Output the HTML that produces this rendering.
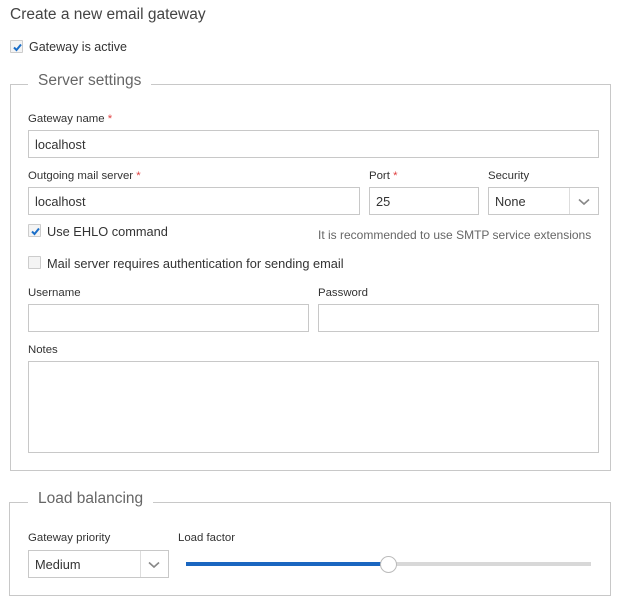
<!DOCTYPE html>
<html><head><meta charset="utf-8"><style>
*{box-sizing:border-box;margin:0;padding:0}
body{width:624px;height:608px;background:#fff;font-family:"Liberation Sans",sans-serif;color:#333;position:relative;overflow:hidden}
.a{position:absolute;white-space:nowrap}
.lbl{font-size:11.4px;color:#333}
.req{color:#e04040}
.inp{position:absolute;border:1px solid #c8c8c8;background:#fff;font-size:12.8px;padding-left:6px;display:flex;align-items:center}
.fs{position:absolute;border:1px solid #c8c8c8}
.leg{position:absolute;background:#fff;font-size:15.5px;color:#666;padding:0 10px}
.cb{position:absolute;width:13px;height:13px;border:1px solid #ccc;background:#f4f4f4;border-radius:1px}
.cb svg{position:absolute;left:1px;top:1px}
.sel .div{position:absolute;top:0;bottom:0;border-left:1px solid #ddd}
.chev{position:absolute}
</style></head><body>
<div class="a" style="left:10px;top:6px;font-size:15.5px;color:#444">Create a new email gateway</div>
<div class="cb" style="left:10px;top:40px"><svg width="11" height="11" viewBox="0 0 11 11"><path d="M2 5.5 L4.5 8 L9 2.5" stroke="#1a6ec8" stroke-width="2" fill="none"/></svg></div>
<div class="a" style="left:29px;top:40px;font-size:12.5px">Gateway is active</div>

<div class="fs" style="left:10px;top:84px;width:601px;height:387px"></div>
<div class="leg" style="left:28px;top:72px">Server settings</div>

<div class="a lbl" style="left:28px;top:113px">Gateway name <span class="req">*</span></div>
<div class="inp" style="left:28px;top:130px;width:571px;height:28px">localhost</div>

<div class="a lbl" style="left:28px;top:170px">Outgoing mail server <span class="req">*</span></div>
<div class="inp" style="left:28px;top:187px;width:332px;height:28px">localhost</div>
<div class="a lbl" style="left:369px;top:170px">Port <span class="req">*</span></div>
<div class="inp" style="left:369px;top:187px;width:110px;height:28px">25</div>
<div class="a lbl" style="left:488px;top:170px">Security</div>
<div class="inp sel" style="left:488px;top:187px;width:111px;height:28px">None<div class="div" style="left:80px"></div>
<svg class="chev" style="left:89px;top:10px" width="12" height="8" viewBox="0 0 12 8"><path d="M1 1.5 L6 6 L11 1.5" stroke="#888" stroke-width="1.6" fill="none"/></svg></div>

<div class="cb" style="left:28px;top:224px"><svg width="11" height="11" viewBox="0 0 11 11"><path d="M2 5.5 L4.5 8 L9 2.5" stroke="#1a6ec8" stroke-width="2" fill="none"/></svg></div>
<div class="a" style="left:47px;top:224px;font-size:12.8px">Use EHLO command</div>
<div class="a" style="left:318px;top:228px;font-size:12px;color:#666">It is recommended to use SMTP service extensions</div>
<div class="cb" style="left:28px;top:256px"></div>
<div class="a" style="left:47px;top:256px;font-size:12.8px">Mail server requires authentication for sending email</div>

<div class="a lbl" style="left:28px;top:287px">Username</div>
<div class="inp" style="left:28px;top:304px;width:281px;height:28px"></div>
<div class="a lbl" style="left:318px;top:287px">Password</div>
<div class="inp" style="left:318px;top:304px;width:281px;height:28px"></div>
<div class="a lbl" style="left:28px;top:344px">Notes</div>
<div class="inp" style="left:28px;top:361px;width:571px;height:92px"></div>

<div class="fs" style="left:9px;top:502px;width:602px;height:94px"></div>
<div class="leg" style="left:28px;top:490px">Load balancing</div>
<div class="a lbl" style="left:28px;top:532px">Gateway priority</div>
<div class="inp sel" style="left:28px;top:550px;width:141px;height:28px">Medium<div class="div" style="left:111px"></div>
<svg class="chev" style="left:119px;top:10px" width="12" height="8" viewBox="0 0 12 8"><path d="M1 1.5 L6 6 L11 1.5" stroke="#888" stroke-width="1.6" fill="none"/></svg></div>
<div class="a lbl" style="left:178px;top:532px">Load factor</div>
<div class="a" style="left:186px;top:562px;width:405px;height:4px;background:#d8d8d8"></div>
<div class="a" style="left:186px;top:562px;width:202px;height:4px;background:#1a66c0"></div>
<div class="a" style="left:380px;top:556px;width:17px;height:17px;border-radius:50%;background:#fff;border:1px solid #bbb"></div>
</body></html>
